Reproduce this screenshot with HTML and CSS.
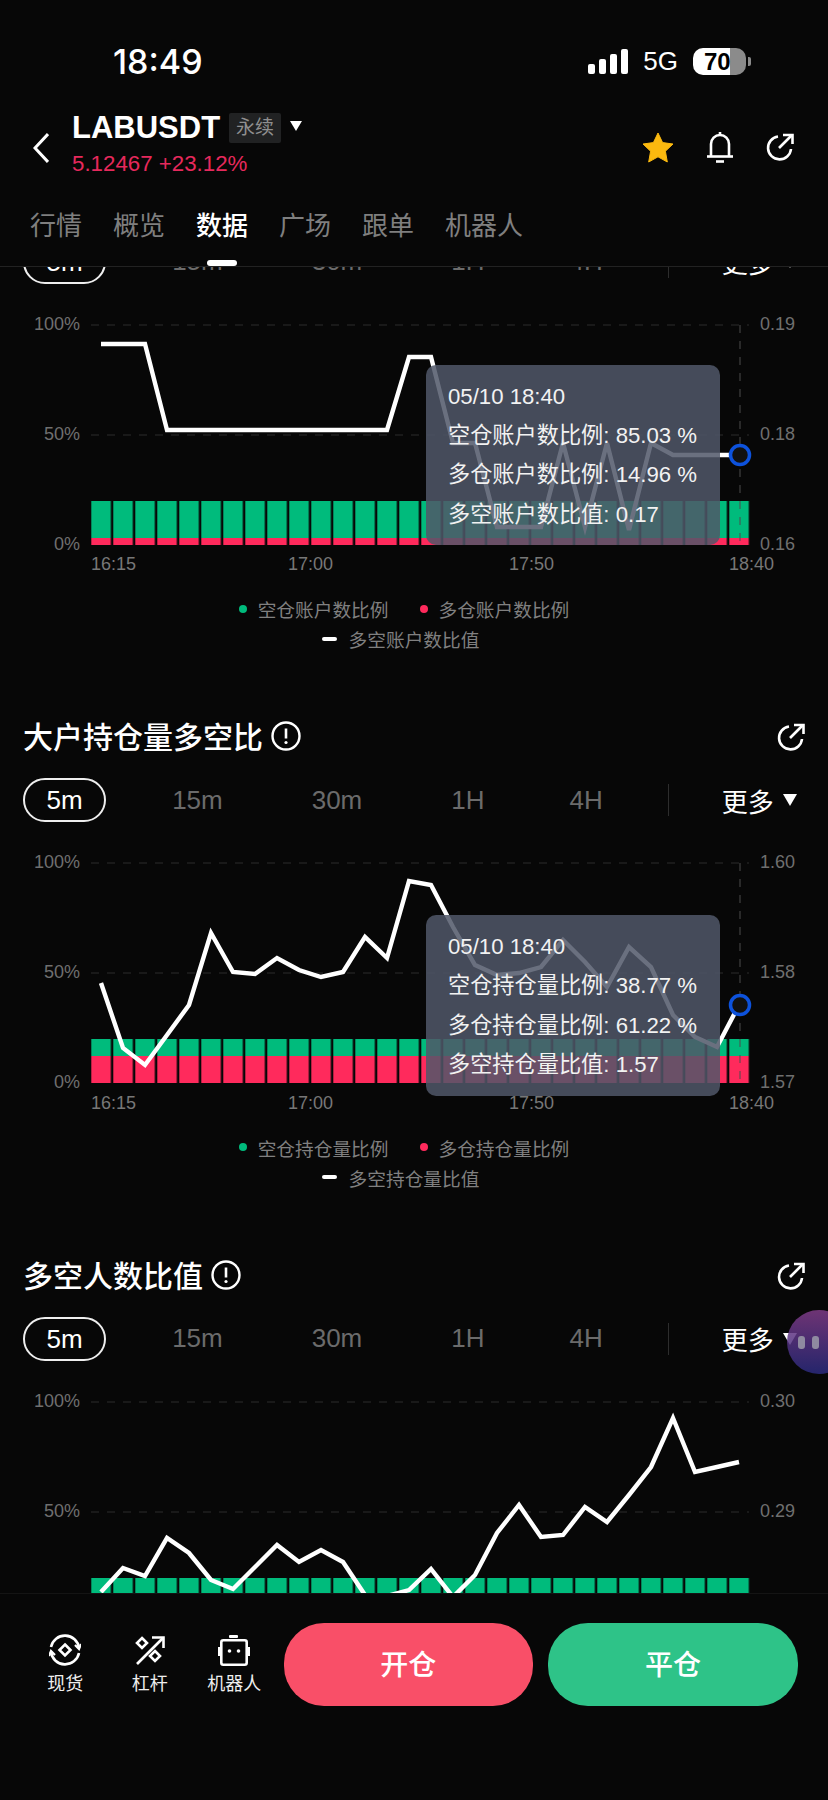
FILE: index.html
```html
<!DOCTYPE html>
<html lang="zh-CN">
<head>
  <meta charset="UTF-8" />
  <meta name="viewport" content="width=device-width, initial-scale=1.0"/>
  <title>LABUSDT 数据</title>
  <link rel="stylesheet" href="styles.css">
</head>
<body>
<div class="app">

  <div class="statusbar">
    <span class="clock">18:49</span>
    <div class="signal"><i class="s1"></i><i class="s2"></i><i class="s3"></i><i class="s4"></i></div>
    <span class="net">5G</span>
    <div class="battery"><span>70</span></div>
    <i class="battery-nub"></i>
  </div>

  <div class="nav">
    <svg class="back" width="16" height="30" viewBox="0 0 16 30"><path d="M15 1 L2 15 L15 29" fill="none" stroke="#fff" stroke-width="3"/></svg>
    <div class="symbol">
      <div class="symbol-top">
        <span class="pair">LABUSDT</span>
        <span class="tag">永续</span>
        <i class="tri"></i>
      </div>
      <div class="price">5.12467 +23.12%</div>
    </div>
    <div class="nav-icons">
      <svg width="32" height="31" viewBox="0 0 32 31"><path d="M16 1 L20.6 10.6 L31 12 L23.4 19.2 L25.3 30 L16 24.8 L6.7 30 L8.6 19.2 L1 12 L11.4 10.6 Z" fill="#fbb90f" stroke="#fbb90f" stroke-linejoin="round"/></svg>
      <svg width="28" height="32" viewBox="0 0 28 32" fill="none" stroke="#fff" stroke-width="2.6"><path d="M5 25 V13 a9 9 0 0 1 18 0 V25"/><path d="M1 25.5 H27"/><path d="M14 1 V4"/><path d="M10 30.5 H18"/></svg>
      <svg class="share" width="28" height="28" viewBox="0 0 28 28" fill="none" stroke="#fff" stroke-width="2.6"><path d="M12 3.5 A11.5 11.5 0 1 0 25 16"/><path d="M13 15 L26 2"/><path d="M17 2 H26.5 V11"/></svg>
    </div>
  </div>

  <div class="tabs">
    <span>行情</span>
    <span>概览</span>
    <span class="active">数据</span>
    <span>广场</span>
    <span>跟单</span>
    <span>机器人</span>
  </div>

  <div class="content">
    <div class="scroll">

      <svg class="defs" width="0" height="0">
        <defs>
          <pattern id="bar-tile" patternUnits="userSpaceOnUse" x="0.3" y="0" width="22" height="220">
            <rect width="19.5" height="220" fill="#fff"/>
          </pattern>
          <mask id="bar-mask" maskUnits="userSpaceOnUse" x="0" y="0" width="660" height="220">
            <rect width="660" height="220" fill="url(#bar-tile)"/>
          </mask>
        </defs>
      </svg>

      <section class="chart scrolled">
        <div class="ranges">
          <span class="range active">5m</span>
          <span class="range">15m</span>
          <span class="range">30m</span>
          <span class="range">1H</span>
          <span class="range">4H</span>
          <i class="ranges-div"></i>
          <span class="more">更多<i class="tri"></i></span>
        </div>
        <div class="plot">
          <div class="y-left"><span>100%</span><span>50%</span><span>0%</span></div>
          <svg class="plot-svg" width="660" height="220" viewBox="0 0 660 220">
            <path class="grid" d="M0 0 H658 M0 110 H658"/>
            <g mask="url(#bar-mask)">
              <rect class="bar-green" y="176" width="660" height="37"/>
              <rect class="bar-red" y="213" width="660" height="7"/>
            </g>
            <path class="cross" d="M649 0 V220"/>
            <polyline class="line" points="10,19 32,19 54,19 76,105 98,105 120,105 142,105 164,105 186,105 208,105 230,105 252,105 274,105 296,105 318,32 340,32 362,118 384,118 406,202 428,202 450,202 472,118 494,202 516,118 538,205 560,118 582,130 604,130 626,130 648,130"/>
            <circle class="dot" cx="649" cy="130" r="9.5"/>
          </svg>
          <div class="y-right"><span>0.19</span><span>0.18</span><span>0.16</span></div>
          <div class="tooltip tip-one">
            <p>05/10 18:40</p>
            <p>空仓账户数比例: 85.03 %</p>
            <p>多仓账户数比例: 14.96 %</p>
            <p>多空账户数比值: 0.17</p>
          </div>
        </div>
        <div class="x-axis"><span>16:15</span><span>17:00</span><span>17:50</span><span>18:40</span></div>
        <div class="legend">
          <div class="legend-row">
            <span class="key"><i class="key-dot green"></i>空仓账户数比例</span>
            <span class="key"><i class="key-dot red"></i>多仓账户数比例</span>
          </div>
          <div class="legend-row single">
            <span class="key"><i class="key-dash"></i>多空账户数比值</span>
          </div>
        </div>
      </section>

      <section class="chart">
        <div class="chart-head">
          <h2>大户持仓量多空比</h2>
          <svg class="info" width="30" height="30" viewBox="0 0 30 30"><circle cx="15" cy="15" r="13.5" fill="none" stroke="#fff" stroke-width="2.4"/><path d="M15 7.5 V17.5" stroke="#fff" stroke-width="2.6"/><circle cx="15" cy="21.5" r="1.6" fill="#fff"/></svg>
          <svg class="share" width="28" height="28" viewBox="0 0 28 28" fill="none" stroke="#fff" stroke-width="2.6"><path d="M12 3.5 A11.5 11.5 0 1 0 25 16"/><path d="M13 15 L26 2"/><path d="M17 2 H26.5 V11"/></svg>
        </div>
        <div class="ranges">
          <span class="range active">5m</span>
          <span class="range">15m</span>
          <span class="range">30m</span>
          <span class="range">1H</span>
          <span class="range">4H</span>
          <i class="ranges-div"></i>
          <span class="more">更多<i class="tri"></i></span>
        </div>
        <div class="plot">
          <div class="y-left"><span>100%</span><span>50%</span><span>0%</span></div>
          <svg class="plot-svg" width="660" height="220" viewBox="0 0 660 220">
            <path class="grid" d="M0 0 H658 M0 110 H658"/>
            <g mask="url(#bar-mask)">
              <rect class="bar-green" y="176" width="660" height="17"/>
              <rect class="bar-red" y="193" width="660" height="27"/>
            </g>
            <path class="cross" d="M649 0 V220"/>
            <polyline class="line" points="10,120 32,185 54,202 76,172 98,142 120,70 142,109 164,111 186,95 208,107 230,114 252,109 274,74 296,95 318,18 340,22 362,64 384,102 406,112 428,110 450,104 472,77 494,99 516,124 538,84 560,104 582,152 604,174 626,184 648,142"/>
            <circle class="dot" cx="649" cy="142" r="9.5"/>
          </svg>
          <div class="y-right"><span>1.60</span><span>1.58</span><span>1.57</span></div>
          <div class="tooltip tip-two">
            <p>05/10 18:40</p>
            <p>空仓持仓量比例: 38.77 %</p>
            <p>多仓持仓量比例: 61.22 %</p>
            <p>多空持仓量比值: 1.57</p>
          </div>
        </div>
        <div class="x-axis"><span>16:15</span><span>17:00</span><span>17:50</span><span>18:40</span></div>
        <div class="legend">
          <div class="legend-row">
            <span class="key"><i class="key-dot green"></i>空仓持仓量比例</span>
            <span class="key"><i class="key-dot red"></i>多仓持仓量比例</span>
          </div>
          <div class="legend-row single">
            <span class="key"><i class="key-dash"></i>多空持仓量比值</span>
          </div>
        </div>
      </section>

      <section class="chart">
        <div class="chart-head">
          <h2>多空人数比值</h2>
          <svg class="info" width="30" height="30" viewBox="0 0 30 30"><circle cx="15" cy="15" r="13.5" fill="none" stroke="#fff" stroke-width="2.4"/><path d="M15 7.5 V17.5" stroke="#fff" stroke-width="2.6"/><circle cx="15" cy="21.5" r="1.6" fill="#fff"/></svg>
          <svg class="share" width="28" height="28" viewBox="0 0 28 28" fill="none" stroke="#fff" stroke-width="2.6"><path d="M12 3.5 A11.5 11.5 0 1 0 25 16"/><path d="M13 15 L26 2"/><path d="M17 2 H26.5 V11"/></svg>
        </div>
        <div class="ranges">
          <span class="range active">5m</span>
          <span class="range">15m</span>
          <span class="range">30m</span>
          <span class="range">1H</span>
          <span class="range">4H</span>
          <i class="ranges-div"></i>
          <span class="more">更多<i class="tri"></i></span>
        </div>
        <div class="plot">
          <div class="y-left"><span>100%</span><span>50%</span><span></span></div>
          <svg class="plot-svg" width="660" height="220" viewBox="0 0 660 220">
            <path class="grid" d="M0 0 H658 M0 110 H658"/>
            <g mask="url(#bar-mask)">
              <rect class="bar-green" y="176" width="660" height="30"/>
              <rect class="bar-red" y="206" width="660" height="14"/>
            </g>
            <polyline class="line" points="10,190 32,166 54,174 76,136 98,151 120,178 142,187 164,165 186,143 208,160 230,148 252,160 274,193 296,194 318,188 340,167 362,195 384,173 406,131 428,103 450,135 472,133 494,105 516,120 538,93 560,65 582,16 604,70 626,65 648,60"/>
          </svg>
          <div class="y-right"><span>0.30</span><span>0.29</span><span></span></div>
        </div>
      </section>

    </div>
  </div>

  <div class="bubble"><i></i><i></i></div>

  <div class="footer">
    <div class="tool">
      <svg width="32" height="32" viewBox="0 0 32 32" fill="none" stroke="#fff" stroke-width="2.6"><path d="M2 13 A14.2 14.2 0 0 1 30 14"/><path d="M30 19 A14.2 14.2 0 0 1 2 18"/><path d="M26 11 L30 15 L32 10" stroke-width="2.2"/><path d="M6 21 L2 17 L0 22" stroke-width="2.2"/><path d="M16 10.5 L21.5 16 L16 21.5 L10.5 16 Z"/></svg>
      <span>现货</span>
    </div>
    <div class="tool">
      <svg width="32" height="32" viewBox="0 0 32 32" fill="none" stroke="#fff" stroke-width="2.6"><path d="M3 30 L29 4"/><path d="M18 3.5 H29.5 V14"/><path d="M8 4 L13 9 L8 14 L3 9 Z"/><path d="M21 17 L26 22 L21 27 L16 22 Z"/></svg>
      <span>杠杆</span>
    </div>
    <div class="tool">
      <svg width="32" height="32" viewBox="0 0 32 32"><rect x="3.3" y="6.3" width="25.4" height="24.4" rx="2" fill="none" stroke="#fff" stroke-width="2.6"/><rect x="11" y="1" width="9" height="3" rx="1" fill="#fff"/><rect x="0" y="13" width="2" height="9" fill="#fff"/><rect x="30" y="13" width="2" height="9" fill="#fff"/><circle cx="11.5" cy="17" r="1.8" fill="#fff"/><circle cx="20.5" cy="17" r="1.8" fill="#fff"/></svg>
      <span>机器人</span>
    </div>
    <button class="trade open">开仓</button>
    <button class="trade close">平仓</button>
  </div>

</div>
</body>
</html>
```

FILE: styles.css
```css
* {
  box-sizing: border-box;
}

body {
  margin: 0;
  background-color: #070707;
  color: #fff;
  font-family: 'Liberation Sans', 'Noto Sans CJK SC', sans-serif;
}

i {
  display: block;
}

.app {
  position: relative;
  width: 828px;
  height: 1800px;
  display: flex;
  flex-direction: column;
  overflow: hidden;
}

/* status bar */
.statusbar {
  height: 100px;
  padding: 39px 0 16px 113px;
  display: flex;
  align-items: center;
}

.clock {
  font-family: Inter, sans-serif;
  font-size: 34px;
  font-weight: 500;
}

.signal {
  margin-left: auto;
  display: flex;
  align-items: flex-end;
  gap: 4px;
  height: 25px;
}

.signal i {
  width: 7px;
  background-color: #fff;
  border-radius: 2px;
}

.s1 { height: 10px; }
.s2 { height: 15px; }
.s3 { height: 20px; }
.s4 { height: 25px; }

.net {
  margin-left: 15px;
  font-size: 26px;
}

.battery {
  margin-left: 15px;
  width: 53px;
  height: 27px;
  border-radius: 10px;
  background: linear-gradient(90deg, #fff 0, #fff 70%, #8b8b8b 70%);
  color: #000;
  font-size: 24px;
  font-weight: 700;
  line-height: 27px;
  padding-left: 11px;
}

.battery-nub {
  width: 3px;
  height: 9px;
  margin: 0 77px 0 2px;
  background-color: #8b8b8b;
  border-radius: 0 2px 2px 0;
}

/* symbol header */
.nav {
  height: 80px;
  padding: 13px 0 0 33px;
  display: flex;
  align-items: flex-start;
}

.back {
  margin: 20px 23px 0 0;
}

.symbol-top {
  display: flex;
  align-items: center;
  height: 30px;
}

.pair {
  font-size: 31px;
  font-weight: 700;
}

.tag {
  margin-left: 9px;
  width: 52px;
  height: 30px;
  background-color: #212223;
  color: #8f8f8f;
  font-size: 19px;
  line-height: 30px;
  text-align: center;
  border-radius: 2px;
}

.tri {
  width: 0;
  height: 0;
  border-left: 6.5px solid transparent;
  border-right: 6.5px solid transparent;
  border-top: 10px solid #fff;
}

.symbol-top .tri {
  margin: -4px 0 0 9px;
}

.price {
  margin-top: 7px;
  color: #e6295c;
  font-size: 22.3px;
  line-height: 28px;
}

.nav-icons {
  margin-left: auto;
  padding: 18px 34px 0 0;
  display: flex;
  align-items: center;
  gap: 32px;
}

/* page tabs */
.tabs {
  height: 87px;
  padding: 29px 0 0 30px;
  display: flex;
  gap: 31px;
  border-bottom: 1px solid #222;
}

.tabs span {
  position: relative;
  height: 36px;
  color: #7f7f7f;
  font-size: 26px;
  line-height: 34px;
}

.tabs .active {
  color: #fff;
  font-weight: 500;
}

.tabs .active::after {
  content: "";
  position: absolute;
  left: 11px;
  top: 51px;
  width: 30px;
  height: 6px;
  border-radius: 3px;
  background-color: #fff;
}

/* scrolling charts */
.content {
  flex: 1;
  overflow: hidden;
}

.defs {
  position: absolute;
}

.chart {
  height: 538.5px;
}

.chart.scrolled {
  height: 475.5px;
  margin-top: -27.5px;
}

.chart-head {
  height: 44px;
  padding-left: 23px;
  display: flex;
  align-items: center;
}

.chart-head h2 {
  margin: -4px 8px 0 0;
  font-size: 30px;
  font-weight: 500;
}

.chart-head .info {
  margin-top: -2px;
}

.chart-head .share {
  margin: 0 23px 0 auto;
}

.ranges {
  height: 44px;
  padding-left: 23px;
  display: flex;
  align-items: center;
  gap: 89px;
}

.chart-head + .ranges {
  margin-top: 19px;
}

.range {
  color: #6b6b6b;
  font-size: 26px;
}

.range.active {
  height: 44px;
  line-height: 40px;
  padding: 0 21.5px;
  margin-right: -23px;
  border: 2px solid #eee;
  border-radius: 22px;
  color: #fff;
}

.range:nth-child(5) {
  margin-left: -4px;
}

.ranges-div {
  width: 1px;
  height: 32px;
  margin: 0 0 0 -24px;
  background-color: #2d2d2d;
}

.more {
  margin-left: -36px;
  display: flex;
  align-items: center;
  gap: 9px;
  font-size: 26px;
}

.more .tri {
  border-left-width: 7.5px;
  border-right-width: 7.5px;
  border-top-width: 12px;
}

.plot {
  position: relative;
  margin-top: 41px;
  height: 220px;
  display: grid;
  grid-template-columns: 91px 658px 1fr;
}

.y-left,
.y-right {
  margin: -12px 0 -10px;
  display: flex;
  flex-direction: column;
  justify-content: space-between;
  color: #6f6f6f;
  font-size: 18px;
  line-height: 22px;
}

.y-left span,
.y-right span {
  height: 22px;
}

.y-left {
  padding-right: 11px;
  text-align: right;
}

.y-right {
  padding-left: 11px;
}

.plot-svg {
  display: block;
  overflow: visible;
}

.grid,
.cross {
  fill: none;
  stroke-width: 1;
  stroke-dasharray: 8 8;
}

.grid { stroke: #2c2c2c; }
.cross { stroke: #4d4d4d; }

.bar-green { fill: #00bb7c; }
.bar-red { fill: #ff2a5c; }

.line {
  fill: none;
  stroke: #fff;
  stroke-width: 4.4;
  stroke-linejoin: miter;
}

.dot {
  fill: #111;
  stroke: #0d52dc;
  stroke-width: 3.5;
}

.tooltip {
  position: absolute;
  left: 426px;
  width: 294px;
  padding: 12px 0 0 22px;
  background-color: rgba(80, 87, 104, 0.85);
  border-radius: 10px;
  font-size: 22.2px;
  line-height: 39.4px;
  color: #f2f2f2;
}

.tooltip p {
  margin: 0;
  white-space: nowrap;
}

.tip-one {
  top: 40px;
  height: 180px;
}

.tip-two {
  top: 52px;
  height: 181px;
}

.x-axis {
  height: 40px;
  padding-left: 91px;
  display: grid;
  grid-template-columns: 197px 221px 220px auto;
  align-items: center;
  color: #777;
  font-size: 18px;
}

.legend {
  margin-top: 9px;
  width: 808px;
  color: #808080;
  font-size: 18.7px;
}

.legend-row {
  height: 30px;
  display: flex;
  justify-content: center;
  align-items: center;
  gap: 31px;
}

.legend-row.single {
  padding-right: 7px;
}

.key {
  display: flex;
  align-items: center;
}

.key-dot {
  width: 8px;
  height: 8px;
  margin-right: 11px;
  border-radius: 50%;
}

.green { background-color: #00bb7c; }
.red { background-color: #ff2a5c; }

.key-dash {
  width: 15px;
  height: 4px;
  margin-right: 12px;
  border-radius: 2px;
  background-color: #fff;
}

/* floating assistant */
.bubble {
  position: absolute;
  left: 787px;
  top: 1310px;
  width: 64px;
  height: 64px;
  padding-left: 11px;
  border-radius: 50%;
  background: linear-gradient(180deg, rgba(128, 60, 135, 0.85), rgba(42, 42, 125, 0.85));
  display: flex;
  align-items: center;
  gap: 7px;
}

.bubble i {
  width: 7px;
  height: 13px;
  border-radius: 3px;
  background-color: #8f8aa0;
}

/* bottom bar */
.footer {
  height: 207.5px;
  padding: 29px 30px 0 23px;
  display: flex;
  align-items: flex-start;
  background-color: #070707;
  border-top: 1px solid #141414;
  z-index: 1;
}

.tool {
  width: 84.5px;
  margin-top: 11px;
  display: flex;
  flex-direction: column;
  align-items: center;
  font-size: 18px;
}

.tool span {
  margin-top: 6px;
  line-height: 24px;
  color: #eee;
}

.trade {
  flex: 1;
  height: 83px;
  padding-bottom: 3px;
  border: none;
  border-radius: 40px;
  color: #fff;
  font-family: inherit;
  font-size: 28px;
  font-weight: 500;
}

.open {
  margin-left: 7px;
  background-color: #f94f68;
}

.close {
  margin-left: 15px;
  background-color: #2ec388;
}
```
